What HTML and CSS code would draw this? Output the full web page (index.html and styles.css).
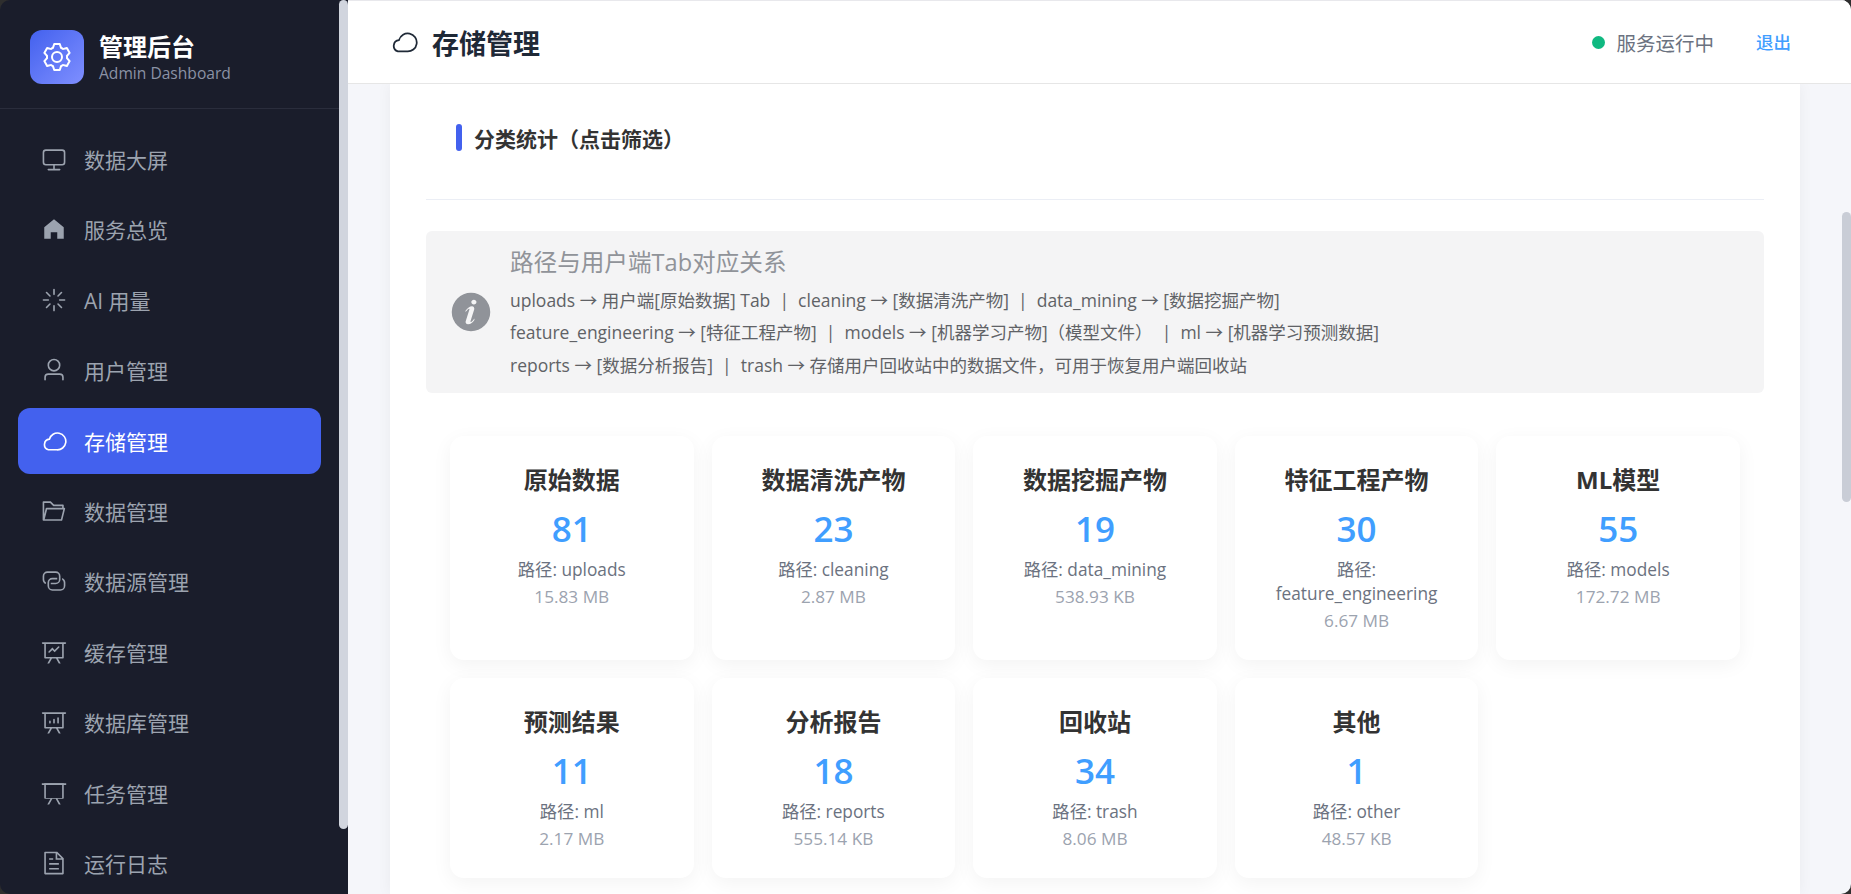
FILE: index.html
```html
<!DOCTYPE html>
<html lang="zh-CN">
<head>
    <meta charset="UTF-8">
    <meta name="viewport" content="width=device-width, initial-scale=1.0">
    <title>存储管理</title>
    <link rel="stylesheet" href="styles.css">
</head>
<body>
    <div class="app">
        <!-- Sidebar -->
        <aside class="sidebar">
            <div class="brand">
                <div class="brand-logo">
                    <svg class="brand-icon" viewBox="0 0 1024 1024"><path d="M600.704 64a32 32 0 0 1 30.464 22.208l35.2 109.376c14.784 7.232 28.928 15.36 42.432 24.512l112.384-24.192a32 32 0 0 1 34.432 15.36L944.32 364.8a32 32 0 0 1-4.032 37.504l-77.12 85.12a357.12 357.12 0 0 1 0 49.024l77.12 85.248a32 32 0 0 1 4.032 37.504l-88.704 153.6a32 32 0 0 1-34.432 15.296L708.8 803.904c-13.44 9.088-27.648 17.28-42.368 24.512l-35.264 109.376A32 32 0 0 1 600.704 960H423.296a32 32 0 0 1-30.464-22.208L357.696 828.48a351.616 351.616 0 0 1-42.56-24.64l-112.32 24.256a32 32 0 0 1-34.432-15.36L79.68 659.2a32 32 0 0 1 4.032-37.504l77.12-85.248a357.12 357.12 0 0 1 0-48.896l-77.12-85.248A32 32 0 0 1 79.68 364.8l88.704-153.6a32 32 0 0 1 34.432-15.296l112.32 24.256c13.568-9.152 27.776-17.408 42.56-24.64l35.2-109.312A32 32 0 0 1 423.232 64H600.64zm-23.424 64H446.72l-36.352 113.088-24.512 11.968a294.113 294.113 0 0 0-34.816 20.096l-22.656 15.36-116.224-25.088-65.28 113.152 79.68 88.192-1.92 27.136a293.12 293.12 0 0 0 0 40.192l1.92 27.136-79.808 88.192 65.344 113.152 116.224-25.024 22.656 15.296a294.113 294.113 0 0 0 34.816 20.096l24.512 11.968L446.72 896h130.688l36.48-113.152 24.448-11.904a288.282 288.282 0 0 0 34.752-20.096l22.592-15.296 116.288 25.024 65.28-113.152-79.744-88.192 1.92-27.136a293.12 293.12 0 0 0 0-40.256l-1.92-27.136 79.808-88.128-65.344-113.152-116.288 24.96-22.592-15.232a287.616 287.616 0 0 0-34.752-20.096l-24.448-11.904L577.344 128zM512 320a192 192 0 1 1 0 384 192 192 0 0 1 0-384zm0 64a128 128 0 1 0 0 256 128 128 0 0 0 0-256z"/></svg>
                </div>
                <div>
                    <div class="brand-title">管理后台</div>
                    <div class="brand-sub">Admin Dashboard</div>
                </div>
            </div>

            <nav class="nav">
                <a class="nav-item">
                    <svg class="nav-icon" viewBox="0 0 1024 1024"><path d="M544 768v128h192a32 32 0 1 1 0 64H288a32 32 0 1 1 0-64h192V768H192A128 128 0 0 1 64 640V256a128 128 0 0 1 128-128h640a128 128 0 0 1 128 128v384a128 128 0 0 1-128 128H544zM192 192a64 64 0 0 0-64 64v384a64 64 0 0 0 64 64h640a64 64 0 0 0 64-64V256a64 64 0 0 0-64-64H192z"/></svg>
                    <span>数据大屏</span>
                </a>
                <a class="nav-item">
                    <svg class="nav-icon" viewBox="0 0 1024 1024"><path d="M512 128 128 447.936V896h255.936V640H640v256h255.936V447.936z"/></svg>
                    <span>服务总览</span>
                </a>
                <a class="nav-item">
                    <svg class="nav-icon" viewBox="0 0 1024 1024"><path d="M512 64a32 32 0 0 1 32 32v192a32 32 0 0 1-64 0V96a32 32 0 0 1 32-32zm0 640a32 32 0 0 1 32 32v192a32 32 0 1 1-64 0V736a32 32 0 0 1 32-32zm448-192a32 32 0 0 1-32 32H736a32 32 0 1 1 0-64h192a32 32 0 0 1 32 32zm-640 0a32 32 0 0 1-32 32H96a32 32 0 0 1 0-64h192a32 32 0 0 1 32 32zM195.2 195.2a32 32 0 0 1 45.248 0L376.32 331.008a32 32 0 0 1-45.248 45.248L195.2 240.448a32 32 0 0 1 0-45.248zm452.544 452.544a32 32 0 0 1 45.248 0L828.8 783.552a32 32 0 0 1-45.248 45.248L647.744 692.992a32 32 0 0 1 0-45.248zM828.8 195.264a32 32 0 0 1 0 45.184L692.992 376.32a32 32 0 0 1-45.248-45.248l135.808-135.808a32 32 0 0 1 45.248 0zm-452.544 452.48a32 32 0 0 1 0 45.248L240.448 828.8a32 32 0 0 1-45.248-45.248l135.808-135.808a32 32 0 0 1 45.248 0z"/></svg>
                    <span>AI 用量</span>
                </a>
                <a class="nav-item">
                    <svg class="nav-icon" viewBox="0 0 1024 1024"><path d="M512 512a192 192 0 1 0 0-384 192 192 0 0 0 0 384zm0 64a256 256 0 1 1 0-512 256 256 0 0 1 0 512zm320 320v-96a96 96 0 0 0-96-96H288a96 96 0 0 0-96 96v96a32 32 0 1 1-64 0v-96a160 160 0 0 1 160-160h448a160 160 0 0 1 160 160v96a32 32 0 1 1-64 0z"/></svg>
                    <span>用户管理</span>
                </a>
                <a class="nav-item active">
                    <svg class="nav-icon cloud" viewBox="0 0 1024 1024"><path d="M620 858H290A214 214 0 0 1 330 440A330 330 0 1 1 620 858Z"/></svg>
                    <span>存储管理</span>
                </a>
                <a class="nav-item">
                    <svg class="nav-icon" viewBox="0 0 1024 1024"><path d="M878.08 448H241.92l-96 384h636.16l96-384zM832 384v-64H485.76L357.504 192H128v448l57.92-231.744A32 32 0 0 1 216.96 384H832zm-24.96 512H96a32 32 0 0 1-32-32V160a32 32 0 0 1 32-32h287.872l128.384 128H864a32 32 0 0 1 32 32v96h23.04a32 32 0 0 1 31.04 39.744l-112 448A32 32 0 0 1 807.04 896z"/></svg>
                    <span>数据管理</span>
                </a>
                <a class="nav-item">
                    <svg class="nav-icon" viewBox="0 0 1024 1024"><path d="M640 384v64H448a128 128 0 0 0-128 128v128a128 128 0 0 0 128 128h320a128 128 0 0 0 128-128V576a128 128 0 0 0-64-110.848V394.88c74.56 26.368 128 97.472 128 181.056v128a192 192 0 0 1-192 192H448a192 192 0 0 1-192-192V576a192 192 0 0 1 192-192h192z"/><path d="M384 640v-64h192a128 128 0 0 0 128-128V320a128 128 0 0 0-128-128H256a128 128 0 0 0-128 128v128a128 128 0 0 0 64 110.848v70.272A192.064 192.064 0 0 1 64 448V320a192 192 0 0 1 192-192h320a192 192 0 0 1 192 192v128a192 192 0 0 1-192 192H384z"/></svg>
                    <span>数据源管理</span>
                </a>
                <a class="nav-item">
                    <svg class="nav-icon" viewBox="0 0 1024 1024"><path d="M359.168 768H160a32 32 0 0 1-32-32V192H64a32 32 0 0 1 0-64h896a32 32 0 1 1 0 64h-64v544a32 32 0 0 1-32 32H665.216l110.848 192h-73.856L591.36 768H433.024L322.176 960H248.32l110.848-192zM832 192H192v512h640V192zM342.656 534.656a32 32 0 1 1-45.312-45.312L448 338.752l90.496 90.496 135.808-135.744a32 32 0 0 1 45.248 45.248L538.496 519.744 448 429.248z"/></svg>
                    <span>缓存管理</span>
                </a>
                <a class="nav-item">
                    <svg class="nav-icon" viewBox="0 0 1024 1024"><path d="m665.216 768 110.848 192h-73.856L591.36 768H433.024L322.176 960H248.32l110.848-192H160a32 32 0 0 1-32-32V192H64a32 32 0 0 1 0-64h896a32 32 0 1 1 0 64h-64v544a32 32 0 0 1-32 32H665.216zM832 192H192v512h640V192zM352 448a32 32 0 0 1 32 32v64a32 32 0 0 1-64 0v-64a32 32 0 0 1 32-32zm160-64a32 32 0 0 1 32 32v128a32 32 0 0 1-64 0V416a32 32 0 0 1 32-32zm160-64a32 32 0 0 1 32 32v192a32 32 0 1 1-64 0V352a32 32 0 0 1 32-32z"/></svg>
                    <span>数据库管理</span>
                </a>
                <a class="nav-item">
                    <svg class="nav-icon" viewBox="0 0 1024 1024"><path d="M32 128h960v64H32z"/><path d="M192 192v512h640V192H192zm-64-64h768v576a32 32 0 0 1-32 32H160a32 32 0 0 1-32-32V128z"/><path d="M322.176 960H248.32l144.64-250.56 55.424 32L322.176 960zm453.888 0h-73.856L576 741.44l55.424-32L776.064 960z"/></svg>
                    <span>任务管理</span>
                </a>
                <a class="nav-item">
                    <svg class="nav-icon" viewBox="0 0 1024 1024"><path d="M832 384H576V128H192v768h640V384zm-26.496-64L640 154.496V320h165.504zM160 64h480l256 256v608a32 32 0 0 1-32 32H160a32 32 0 0 1-32-32V96a32 32 0 0 1 32-32zm160 448h384v64H320v-64zm0-192h160v64H320v-64zm0 384h384v64H320v-64z"/></svg>
                    <span>运行日志</span>
                </a>
            </nav>
            <div class="sidebar-thumb"></div>
        </aside>

        <!-- Main -->
        <main class="main">
            <header class="topbar">
                <div class="page-title">
                    <svg class="page-icon" viewBox="0 0 1024 1024"><path d="M620 858H290A214 214 0 0 1 330 440A330 330 0 1 1 620 858Z"/></svg>
                    <h1>存储管理</h1>
                </div>
                <div class="topbar-right">
                    <span class="status-dot"></span>
                    <span class="status-text">服务运行中</span>
                    <a class="logout">退出</a>
                </div>
            </header>

            <div class="content">
                <div class="panel">
                    <div class="panel-header">
                        <span class="panel-bar"></span>
                        <h2 class="panel-title">分类统计（点击筛选）</h2>
                    </div>

                    <div class="alert">
                        <svg class="alert-icon" viewBox="0 0 1024 1024"><path d="M512 64a448 448 0 1 1 0 896.064A448 448 0 0 1 512 64zm67.2 275.072c33.28 0 60.288-23.104 60.288-57.344s-27.072-57.344-60.288-57.344c-33.28 0-60.16 23.104-60.16 57.344s26.88 57.344 60.16 57.344zM590.912 699.2c0-6.848 2.368-24.64 1.024-34.752l-52.608 60.544c-10.88 11.456-24.512 19.392-30.912 17.28a12.992 12.992 0 0 1-8.256-14.72l87.68-276.992c7.168-35.136-12.544-67.2-54.336-71.296-44.096 0-108.992 44.736-148.48 101.504 0 6.784-1.28 23.68.064 33.792l52.544-60.608c10.88-11.328 23.552-19.328 29.952-17.152a12.8 12.8 0 0 1 7.808 16.128L388.48 728.576c-10.048 32.256 8.96 63.872 55.04 71.04 67.84 0 107.904-43.648 147.456-100.416z"/></svg>
                        <div>
                            <div class="alert-title">路径与用户端Tab对应关系</div>
                            <div class="alert-line">uploads → 用户端[原始数据] Tab &nbsp;|&nbsp; cleaning → [数据清洗产物] &nbsp;|&nbsp; data_mining → [数据挖掘产物]</div>
                            <div class="alert-line">feature_engineering → [特征工程产物] &nbsp;|&nbsp; models → [机器学习产物]（模型文件） &nbsp;|&nbsp; ml → [机器学习预测数据]</div>
                            <div class="alert-line">reports → [数据分析报告] &nbsp;|&nbsp; trash → 存储用户回收站中的数据文件，可用于恢复用户端回收站</div>
                        </div>
                    </div>

                    <div class="stats-grid">
                        <div class="stat-card">
                            <div class="stat-name">原始数据</div>
                            <div class="stat-value">81</div>
                            <div class="stat-path">路径: uploads</div>
                            <div class="stat-size">15.83 MB</div>
                        </div>
                        <div class="stat-card">
                            <div class="stat-name">数据清洗产物</div>
                            <div class="stat-value">23</div>
                            <div class="stat-path">路径: cleaning</div>
                            <div class="stat-size">2.87 MB</div>
                        </div>
                        <div class="stat-card">
                            <div class="stat-name">数据挖掘产物</div>
                            <div class="stat-value">19</div>
                            <div class="stat-path">路径: data_mining</div>
                            <div class="stat-size">538.93 KB</div>
                        </div>
                        <div class="stat-card">
                            <div class="stat-name">特征工程产物</div>
                            <div class="stat-value">30</div>
                            <div class="stat-path">路径: feature_engineering</div>
                            <div class="stat-size">6.67 MB</div>
                        </div>
                        <div class="stat-card">
                            <div class="stat-name">ML模型</div>
                            <div class="stat-value">55</div>
                            <div class="stat-path">路径: models</div>
                            <div class="stat-size">172.72 MB</div>
                        </div>
                        <div class="stat-card">
                            <div class="stat-name">预测结果</div>
                            <div class="stat-value">11</div>
                            <div class="stat-path">路径: ml</div>
                            <div class="stat-size">2.17 MB</div>
                        </div>
                        <div class="stat-card">
                            <div class="stat-name">分析报告</div>
                            <div class="stat-value">18</div>
                            <div class="stat-path">路径: reports</div>
                            <div class="stat-size">555.14 KB</div>
                        </div>
                        <div class="stat-card">
                            <div class="stat-name">回收站</div>
                            <div class="stat-value">34</div>
                            <div class="stat-path">路径: trash</div>
                            <div class="stat-size">8.06 MB</div>
                        </div>
                        <div class="stat-card">
                            <div class="stat-name">其他</div>
                            <div class="stat-value">1</div>
                            <div class="stat-path">路径: other</div>
                            <div class="stat-size">48.57 KB</div>
                        </div>
                    </div>
                </div>
            </div>
            <div class="main-thumb"></div>
        </main>
    </div>
</body>
</html>
```

FILE: styles.css
```css
/* Reset and base styles */
* {
    margin: 0;
    padding: 0;
    box-sizing: border-box;
}

html, body {
    height: 100%;
    overflow: hidden;
}

body {
    font-family: "Open Sans", "Noto Sans CJK SC", sans-serif;
    background: #2e2e2e;
    color: #333;
}

.app {
    display: flex;
    height: 100vh;
    border-radius: 10px;
    overflow: hidden;
}

/* Sidebar */
.sidebar {
    position: relative;
    flex: 0 0 348px;
    background: #1a1d2b;
    overflow: hidden;
}

.sidebar-thumb {
    position: absolute;
    top: 0;
    left: 339px;
    width: 9px;
    height: 829px;
    background: #d1d5de;
    border-radius: 5px;
}

.brand {
    display: flex;
    align-items: center;
    gap: 15px;
    width: 339px;
    height: 109px;
    padding: 6px 30px 0;
    border-bottom: 1px solid #2a2d3c;
}

.brand-logo {
    display: flex;
    align-items: center;
    justify-content: center;
    flex: 0 0 54px;
    height: 54px;
    border-radius: 12px;
    background: linear-gradient(135deg, #4361ee, #7f8fff);
}

.brand-icon {
    width: 32px;
    height: 32px;
    fill: #fff;
}

.brand-title {
    font-size: 24px;
    line-height: 30px;
    font-weight: 700;
    color: #fff;
}

.brand-sub {
    font-size: 15.6px;
    line-height: 20px;
    margin-top: 1px;
    color: #8b92a5;
}

.nav {
    padding: 17px 18px 0;
    width: 339px;
}

.nav-item {
    display: flex;
    align-items: center;
    gap: 17px;
    height: 66px;
    margin-bottom: 4.4px;
    padding-left: 23px;
    border-radius: 12px;
    font-size: 21px;
    color: #9ca3af;
}

.nav-item.active {
    background: #4361ee;
    color: #fff;
}

.nav-icon {
    flex: 0 0 26px;
    height: 26px;
    fill: currentColor;
}

.nav-icon.cloud {
    fill: none;
    stroke: currentColor;
    stroke-width: 64;
}

/* Main */
.main {
    position: relative;
    flex: 1;
    display: flex;
    flex-direction: column;
    min-width: 0;
    background: #f5f6fa;
}

.main-thumb {
    position: absolute;
    top: 212px;
    right: 0;
    width: 9px;
    height: 290px;
    background: #c9cdd6;
    border-radius: 5px;
}

.topbar {
    display: flex;
    justify-content: space-between;
    align-items: center;
    flex: 0 0 84px;
    padding: 0 60px 0 42px;
    background: #fff;
    border-top: 1px solid #e8e8ec;
    border-bottom: 1px solid #e6e6e6;
}

.page-title {
    display: flex;
    align-items: center;
    gap: 14px;
}

.page-title h1 {
    font-size: 27px;
    font-weight: 700;
    color: #1f2937;
}

.page-icon {
    width: 28px;
    height: 28px;
    fill: none;
    stroke: #1f2937;
    stroke-width: 64;
}

.topbar-right {
    display: flex;
    align-items: center;
}

.status-dot {
    width: 13px;
    height: 13px;
    margin-right: 11px;
    border-radius: 50%;
    background: #10b981;
}

.status-text {
    margin-right: 42px;
    font-size: 19.5px;
    color: #6b7280;
}

.logout {
    margin-top: -2px;
    font-size: 17.5px;
    font-weight: 500;
    color: #409eff;
}

.content {
    flex: 1;
    min-height: 0;
    overflow: hidden;
    padding: 0 51px 0 42px;
}

.panel {
    height: 100%;
    padding: 0 36px;
    background: #fff;
    box-shadow: 0 0 14px rgba(0, 0, 0, 0.05);
}

.panel-header {
    display: flex;
    align-items: center;
    gap: 12px;
    height: 116px;
    padding: 0 30px 8px;
    border-bottom: 1px solid #ebeef5;
}

.panel-bar {
    width: 6px;
    height: 27px;
    border-radius: 3px;
    background: #4361ee;
}

.panel-title {
    font-size: 21px;
    line-height: 30px;
    padding-top: 2px;
    font-weight: 700;
    color: #333;
}

/* Path notice */
.alert {
    display: flex;
    align-items: center;
    gap: 17px;
    height: 162px;
    margin-top: 31px;
    padding: 0 23px;
    border-radius: 6px;
    background: #f4f4f5;
}

.alert-icon {
    flex: 0 0 44px;
    height: 44px;
    fill: #909399;
}

.alert-title {
    padding-top: 3px;
    font-size: 23.6px;
    line-height: 32px;
    margin-bottom: 6px;
    color: #909399;
}

.alert-line {
    font-size: 17.5px;
    line-height: 32.5px;
    color: #606266;
}

/* Stats Grid */
.stats-grid {
    display: grid;
    grid-template-columns: repeat(5, 1fr);
    gap: 18px;
    padding: 43px 24px 0;
}

.stat-card {
    padding: 24px 25px 27px;
    border-radius: 14px;
    background: #fff;
    box-shadow: 0 5px 20px rgba(0, 0, 0, 0.05);
    text-align: center;
}

.stat-name {
    font-size: 24px;
    line-height: 40px;
    font-weight: 700;
    color: #333;
}

.stat-value {
    margin-top: 7px;
    font-size: 35px;
    line-height: 44px;
    font-weight: 600;
    color: #409eff;
}

.stat-path {
    margin-top: 7px;
    font-size: 17.3px;
    line-height: 24px;
    color: #6b7280;
}

.stat-size {
    margin-top: 3px;
    font-size: 17.2px;
    line-height: 24px;
    color: #9ca3af;
}
```
